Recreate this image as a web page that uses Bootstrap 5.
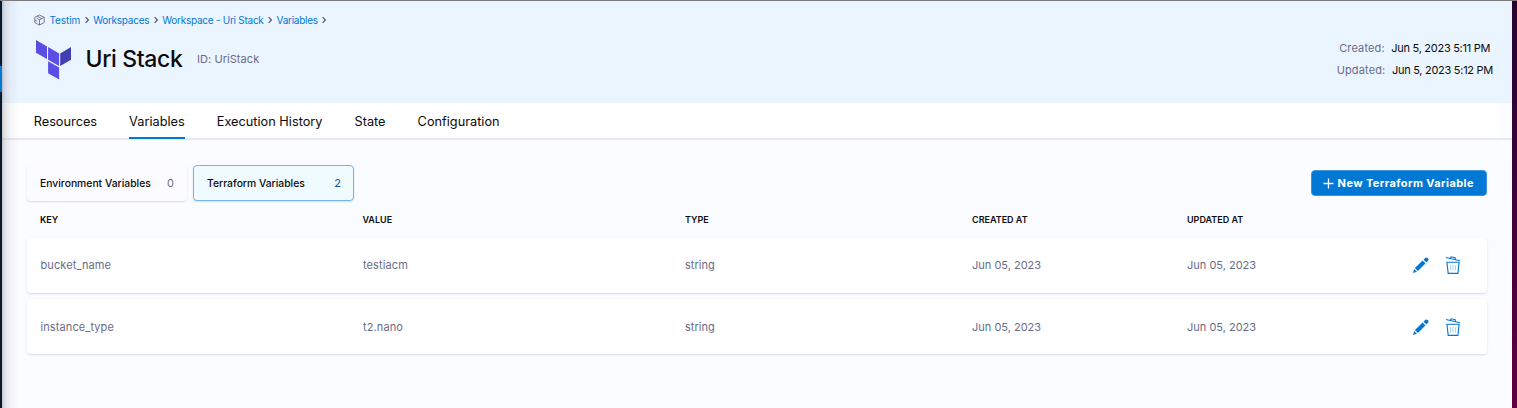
<!DOCTYPE html>
<html lang="en">
<head>
<meta charset="utf-8">
<meta name="viewport" content="width=device-width, initial-scale=1">
<title>Uri Stack - Variables</title>
<link href="https://cdn.jsdelivr.net/npm/bootstrap@5.3.0/dist/css/bootstrap.min.css" rel="stylesheet">
<style>
body{font-family:Inter,"Liberation Sans",sans-serif;font-size:11px;line-height:16px;color:#0b0b0d;background:#fbfcff;border-top:1px solid #7b7b7f;height:408px;overflow:hidden}
a{text-decoration:none;color:#0278d5}
svg{display:block;flex:none}
.rail{width:2px;background:linear-gradient(#07182b 65px,#0278d5 65px 91px,#07182b 91px)}
.desk{width:5px;background:linear-gradient(#26042f,#3b0338 45%,#60003f)}
.main{background:#fbfcff}
.main::before{content:"";position:absolute;inset:0 auto 0 0;width:17px;background:linear-gradient(90deg,rgba(40,41,61,.25),rgba(40,41,61,.12) 3px,rgba(40,41,61,.05) 8px,rgba(40,41,61,0));z-index:2}
.head{height:102px;background:#ebf5ff;padding:11px 19px 0 32px}
.crumbs{font-size:10px;letter-spacing:-.26px;gap:4.500px}
.crumbs a:first-of-type{letter-spacing:-.1px}
.name{font-size:23px;line-height:32px;font-weight:500;letter-spacing:-.35px;margin:-2px 14.500px 0 14.500px}
.muted{color:#6a6b88}
.title-id{letter-spacing:.06px;margin-top:-2px}
.stamps{padding-top:28px}
.stamps>div{gap:6.500px;height:22.400px;letter-spacing:-.28px}
.stamps .muted{letter-spacing:.14px}
.stamps .made{padding-left:2.500px}
.tabs{height:37px;background:linear-gradient(90deg,#fff 1497px,#fbfcff 1497px);border-bottom:2px solid #e8e9f0;padding-left:31.700px;gap:32px;font-size:12.750px}
.tabs a{height:36px;line-height:37px;color:#0b0b0d}
.tabs .active{border-bottom:2px solid #0278d5}
.content{padding:25px 25.500px 0 25px}
.picks{gap:6px}
.pick{width:160px;height:36px;border:1px solid transparent;border-radius:4px;padding:0 12px;font-size:10.350px;font-weight:500;box-shadow:0 1px 2px rgba(96,97,112,.2);background:#fcfcff}
.pick.on{width:161px;background:#effbff;border-color:#72b4e9;padding-left:13px}
.pick .num{font-size:11px;font-weight:400;color:#6a6b88}
.pick.on .num{color:#0a4fa8}
.add{width:175.500px;height:26px;background:#0278d5;border:1px solid #3b94de;border-radius:4px;color:#fff;font-size:11px;line-height:16px;font-weight:700;letter-spacing:.4px;gap:4px;padding:0 1px 0 0}
.line{display:grid;grid-template-columns:322.500px 322.500px 287px 215px 226px auto;align-items:center;padding-left:13px}
.labels{font-size:9px;font-weight:600;height:37px}
.item{height:55px;margin-bottom:6px;background:#fff;border-radius:4px;box-shadow:0 1px 2px rgba(96,97,112,.22);color:#6a6b88}
.labels+.item{padding-bottom:2px}
.item>:first-child,.item>:nth-child(2){letter-spacing:.1px;padding-left:.500px}
.item svg+svg{margin-top:1px}
</style>
</head>
<body>
<svg width="0" height="0" class="position-absolute">
<symbol id="pencil" viewBox="0 0 16 16"><path fill="#0278d5" d="M0 16l1.200-4 2.700 2.700zM1.900 11.100l7.700-7.600 2.900 2.900L4.900 14zM10.500 2.700l1.700-1.700q1.300-1.200 2.600 0t.2 2.700l-1.600 1.800z"/></symbol>
<symbol id="bin" viewBox="0 0 16 18"><g fill="none" stroke="#0278d5"><path stroke-width="1.100" d="M1 1.500l14 3.200M5.500 2.300l.6-1.500 4.100.9.100 1.600"/><path stroke-width="1.100" d="M1.900 6.200h12.200l-1.200 11.200H3.200z"/><path stroke-width="1" opacity=".35" d="M5.300 9l.4 5.400M8 9v5.400M10.800 9l-.4 5.400"/></g></symbol>
<symbol id="chev" viewBox="0 0 4 8"><path d="M.6 1.200L3.400 4 .6 6.800" fill="none" stroke="#4f5162" stroke-width="1.100"/></symbol>
</svg>
<div class="d-flex h-100">
<div class="rail"></div>
<main class="main position-relative flex-grow-1">
<header class="head d-flex justify-content-between">
<div>
<nav class="crumbs d-flex align-items-center" aria-label="breadcrumb">
<svg width="11" height="12" viewBox="0 0 11 12" fill="none" stroke="#6b6d85" stroke-width=".9"><path d="M5.500 1L10.200 3.300v5.200L5.500 11 .8 8.500V3.300zM2.800 4.300l2.700 1.500 4.700-2.500M5.500 5.800V11M3.200 2.200l4.500 2.300M.8 6l2.300 1.200"/></svg>
<a href="#">Testim</a><svg width="4" height="8"><use href="#chev"/></svg>
<a href="#">Workspaces</a><svg width="4" height="8"><use href="#chev"/></svg>
<a href="#">Workspace - Uri Stack</a><svg width="4" height="8"><use href="#chev"/></svg>
<a href="#">Variables</a><svg width="4" height="8"><use href="#chev"/></svg>
</nav>
<div class="d-flex align-items-center pt-2 mt-1">
<svg width="37" height="40" viewBox="0 0 37 40"><path fill="#5c4ee5" d="M2 0l11 6.400v12.700L2 12.700zM14.100 7l11 6.400v12.700l-11-6.400zM14.100 21.300l11 6.300v11.800l-11-6.200z"/><path fill="#4040b2" d="M26.200 13.400L37 7.100v12.600l-10.800 6.400z"/></svg>
<h1 class="name">Uri Stack</h1><span class="muted title-id">ID: UriStack</span>
</div>
</div>
<div class="stamps">
<div class="d-flex made"><span class="muted">Created:</span><span>Jun 5, 2023 5:11 PM</span></div>
<div class="d-flex"><span class="muted">Updated:</span><span>Jun 5, 2023 5:12 PM</span></div>
</div>
</header>
<nav class="tabs d-flex"><a href="#">Resources</a><a href="#" class="active">Variables</a><a href="#">Execution History</a><a href="#">State</a><a href="#">Configuration</a></nav>
<section class="content">
<div class="d-flex align-items-center justify-content-between">
<div class="d-flex picks">
<div class="pick d-flex align-items-center justify-content-between"><span>Environment Variables</span><span class="num">0</span></div>
<div class="pick on d-flex align-items-center justify-content-between"><span>Terraform Variables</span><span class="num">2</span></div>
</div>
<button class="add btn d-flex align-items-center justify-content-center"><svg width="11" height="11" viewBox="0 0 11 11"><path d="M5.500 .5v10M.5 5.500h10" stroke="#fff" stroke-width="1.300"/></svg>New Terraform Variable</button>
</div>
<div class="line labels"><span>KEY</span><span>VALUE</span><span>TYPE</span><span>CREATED AT</span><span>UPDATED AT</span></div>
<div class="line item"><span>bucket_name</span><span>testiacm</span><span>string</span><span>Jun 05, 2023</span><span>Jun 05, 2023</span><div class="d-flex align-items-center"><svg width="16" height="16" class="me-3"><use href="#pencil"/></svg><svg width="16" height="18"><use href="#bin"/></svg></div></div>
<div class="line item"><span>instance_type</span><span>t2.nano</span><span>string</span><span>Jun 05, 2023</span><span>Jun 05, 2023</span><div class="d-flex align-items-center"><svg width="16" height="16" class="me-3"><use href="#pencil"/></svg><svg width="16" height="18"><use href="#bin"/></svg></div></div>
</section>
</main>
<div class="desk"></div>
</div>
<script src="https://cdn.jsdelivr.net/npm/bootstrap@5.3.0/dist/js/bootstrap.bundle.min.js"></script>
</body>
</html>
